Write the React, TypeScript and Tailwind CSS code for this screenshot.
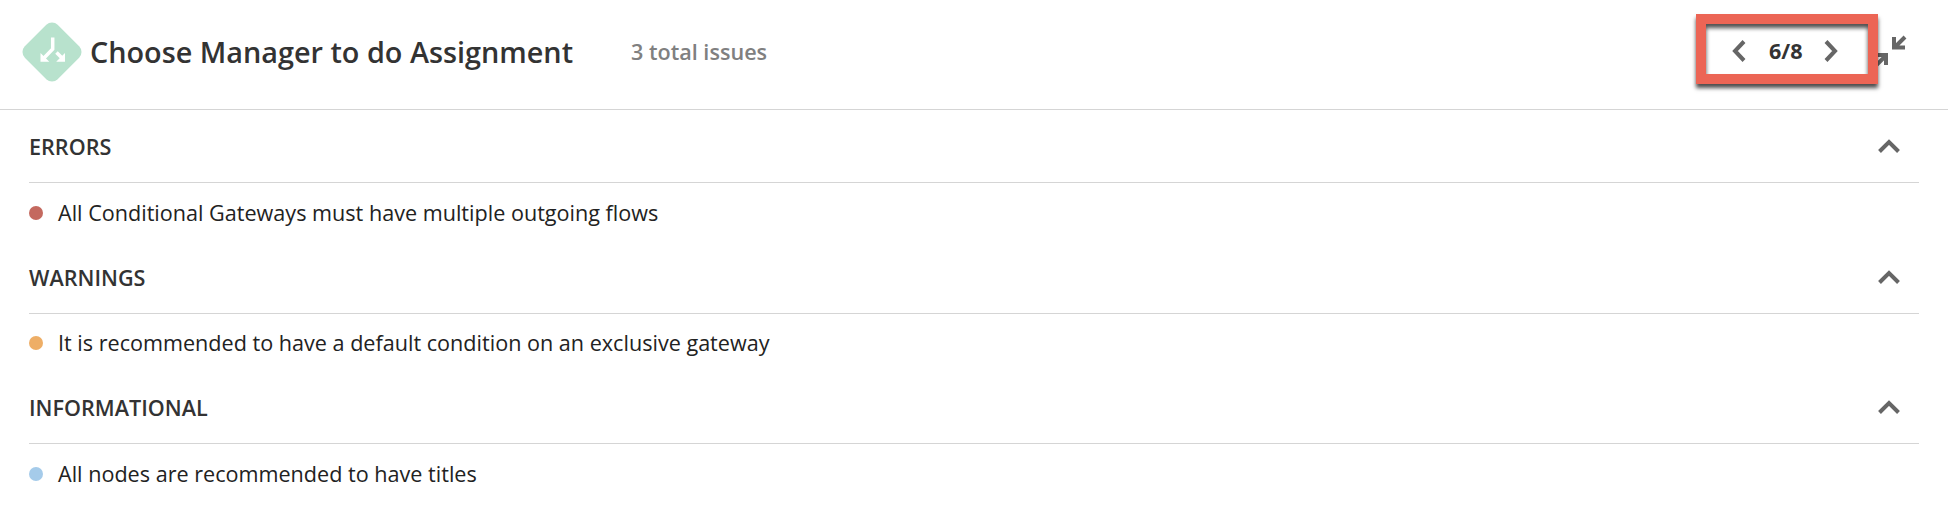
import React from "react";

type Section = { title: string; dot: string; message: string; box: string; row: string };

const sections: Section[] = [
  { title: "ERRORS", dot: "bg-[#c4695f]", message: "All Conditional Gateways must have multiple outgoing flows", box: "h-[131px]", row: "h-[59px]" },
  { title: "WARNINGS", dot: "bg-[#eeae66]", message: "It is recommended to have a default condition on an exclusive gateway", box: "h-[130px]", row: "h-[58px]" },
  { title: "INFORMATIONAL", dot: "bg-[#a5cbea]", message: "All nodes are recommended to have titles", box: "h-[130px]", row: "h-[59px]" },
];

function GatewayIcon() {
  return (
    <svg width="60" height="60" viewBox="0 0 60 60" className="shrink-0">
      <rect x="6.8" y="6.8" width="46.4" height="46.4" rx="8" transform="rotate(45 30 30)" fill="#b8e2cd" />
      <g fill="none" stroke="#fff" strokeWidth="3.5">
        <path d="M30.700 15.500v11.500L22 36" />
        <path d="M34.500 30.500l6 6" />
      </g>
      <path d="M18.500 31v8.800h8.800z M43 31v8.800h-8.800z" fill="#fff" />
    </svg>
  );
}

function CollapseIcon() {
  return (
    <svg width="32" height="32" viewBox="0 0 32 32" fill="none" stroke="#666" strokeWidth="4">
      <path d="M19 2V12.500h11M30 2L19.500 12.500" />
      <path d="M2 20h9V30M11 20.500L0 31.500" />
    </svg>
  );
}

export default function App() {
  return (
    <main className="h-[524px] w-[1948px] overflow-hidden bg-white font-['Open_Sans','Noto_Sans',sans-serif] text-[#333]">
      <header className="flex h-[110px] items-start border-b border-[#d5d5d5] pl-[22px]">
        <div className="flex h-[103px] items-center">
          <GatewayIcon />
          <h1 className="ml-[8px] w-[541px] whitespace-nowrap text-[28.8px] font-semibold leading-[38px]">Choose Manager to do Assignment</h1>
          <p className="whitespace-nowrap text-[21.6px] font-semibold leading-[30px] text-[#808080]">3 total issues</p>
        </div>
        <div className="ml-auto mr-[41px] mt-[14px] flex">
          <div className="relative z-10 flex h-[70px] w-[182px] items-center border-[10px] border-[#ec6555] bg-white pl-[25px] shadow-[0_4px_4px_rgba(0,0,0,0.7),inset_0_4px_4px_rgba(0,0,0,0.7)]">
            <svg width="16" height="26" viewBox="0 0 16 26" fill="none" stroke="#666" strokeWidth="4" className="mt-[4px]">
              <path d="M13 3.500L4 13l9 9.500" />
            </svg>
            <span className="ml-[22px] mt-[3px] w-[54px] text-[21.6px] font-bold leading-[30px]">6/8</span>
            <svg width="16" height="26" viewBox="0 0 16 26" fill="none" stroke="#666" strokeWidth="4" className="mt-[4px]">
              <path d="M3 3.500L12 13l-9 9.500" />
            </svg>
          </div>
          <div className="-ml-[3px] mt-[21px] h-[32px]">
            <CollapseIcon />
          </div>
        </div>
      </header>
      <div className="px-[29px]">
        {sections.map((s) => (
          <section key={s.title} className={s.box}>
            <div className="flex h-[73px] items-center justify-between border-b border-[#d5d5d5] pr-[18px]">
              <h2 className="pt-[2px] text-[21.6px] font-semibold leading-[30px]">{s.title}</h2>
              <svg width="24" height="16" viewBox="0 0 24 16" fill="none" stroke="#666" strokeWidth="4">
                <path d="M2.500 13.500L12 4l9.500 9.500" />
              </svg>
            </div>
            <div className={"flex items-center " + s.row}>
              <span className={"h-[14px] w-[14px] rounded-full " + s.dot} />
              <p className="ml-[15px] whitespace-nowrap text-[21.6px] leading-[30px] text-[#222]">{s.message}</p>
            </div>
          </section>
        ))}
      </div>
    </main>
  );
}
